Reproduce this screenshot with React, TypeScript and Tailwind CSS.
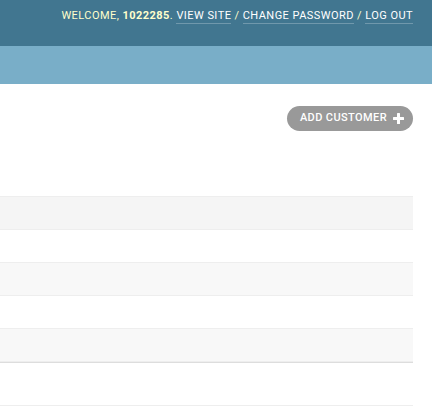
const rows = ["bg-[#f5f5f5]", "bg-white", "bg-[#f8f8f8]", "bg-white", "bg-[#f8f8f8]"];

const PlusIcon = () => (
  <svg width="11" height="11" viewBox="0 0 11 11" fill="white">
    <rect x="4" y="0" width="3" height="11" rx="0.5" />
    <rect x="0" y="4" width="11" height="3" rx="0.5" />
  </svg>
);

const App = () => {
  return (
    <div className="min-h-screen bg-white font-['Roboto',sans-serif] text-[11px] tracking-[0.45px]">
      <header className="h-[46px] bg-[#417690] flex justify-end pr-[19px] pt-[9px]">
        <div className="uppercase text-[#ffc] leading-[14px]">
          Welcome, <strong className="font-bold">1022285</strong>.{" "}
          <a className="text-white border-b border-white/25 pb-[1px]" href="#">View site</a> /{" "}
          <a className="text-white border-b border-white/25 pb-[1px]" href="#">Change password</a> /{" "}
          <a className="text-white border-b border-white/25 pb-[1px]" href="#">Log out</a>
        </div>
      </header>
      <div className="h-[38px] bg-[#79aec8]" />

      <main className="pr-[19px]">
        <div className="flex justify-end pt-[22px]">
          <a
            href="#"
            className="flex items-center h-[25px] pl-[13px] pr-[9px] gap-[6px] rounded-full bg-[#999] text-white uppercase font-medium tracking-[0.4px]"
          >
            Add customer
            <PlusIcon />
          </a>
        </div>

        <div className="mt-[65px] border-t border-[#eee]">
          {rows.map((bg, i) => (
            <div key={i} className={`h-[33px] border-b border-[#eee] ${bg}`} />
          ))}
          <div className="h-[44px] border-t border-[#ddd] border-b border-b-[#eee]" />
        </div>
      </main>
    </div>
  );
};

export default App;
